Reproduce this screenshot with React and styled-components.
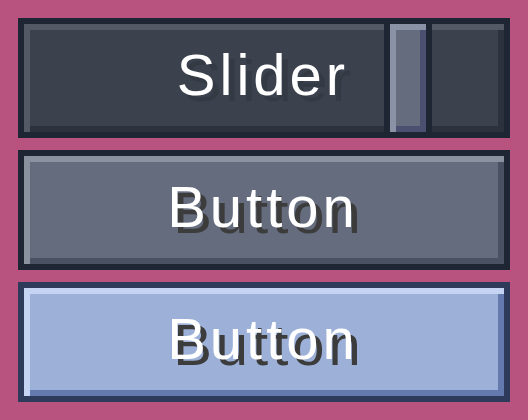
import React from "react";
import styled, { createGlobalStyle, css } from "styled-components";

const GlobalStyle = createGlobalStyle`
  html, body {
    margin: 0;
    padding: 0;
    background: #b8527e;
  }
  body {
    font-family: "Liberation Sans", Arial, sans-serif;
  }
`;

const Page = styled.div`
  width: 528px;
  height: 420px;
  box-sizing: border-box;
  padding: 18px;
  display: flex;
  flex-direction: column;
  gap: 12px;
  background: #b8527e;
`;

const variants = {
  dark: {
    border: "#1e2533",
    body: "#3b424e",
    light: "#535a66",
    shade: "#2b323e",
    textShadow: "#343a44",
  },
  gray: {
    border: "#1e2533",
    body: "#646c7e",
    light: "#8a919f",
    shade: "#4a5163",
    textShadow: "#3c3c3c",
  },
  blue: {
    border: "#2d3a5a",
    body: "#9db1d8",
    light: "#c4d4f2",
    shade: "#6479ad",
    textShadow: "#3c3c3c",
  },
};

const bevel = (v) => css`
  background: ${v.body};
  box-shadow: inset 6px 6px 0 ${v.light}, inset -6px -6px 0 ${v.shade};
`;

const Frame = styled.div`
  height: 120px;
  box-sizing: border-box;
  border: 6px solid ${(p) => variants[p.$variant].border};
  display: flex;
`;

const Face = styled.button`
  flex: 1;
  margin: 0;
  border: 0;
  padding: 0 2px 6px 0;
  display: flex;
  align-items: center;
  justify-content: center;
  position: relative;
  cursor: pointer;
  ${(p) => bevel(variants[p.$variant])}
`;

const Label = styled.span`
  position: relative;
  z-index: 1;
  font-family: "Liberation Sans", Arial, sans-serif;
  font-size: 58px;
  line-height: 58px;
  letter-spacing: 4px;
  color: #ffffff;
  text-shadow: 6px 6px 0 ${(p) => variants[p.$variant].textShadow};
  white-space: nowrap;
`;

const Thumb = styled.div`
  position: absolute;
  top: 0;
  bottom: 0;
  width: 36px;
  border-left: 6px solid #1e2533;
  border-right: 6px solid #1e2533;
  background: #646c7e;
  box-shadow: inset 6px 6px 0 #8a93a5, inset -6px -6px 0 #4b5070;
`;

function Slider({ value, label }) {
  const trackWidth = 480;
  const thumbWidth = 48;
  const left = Math.round(((trackWidth - thumbWidth) * value) / 6) * 6;
  return (
    <Frame $variant="dark">
      <Face as="div" $variant="dark" role="slider" aria-valuenow={value}>
        <Thumb style={{ left }} />
        <Label $variant="dark">{label}</Label>
      </Face>
    </Frame>
  );
}

function Button({ variant, children }) {
  return (
    <Frame $variant={variant}>
      <Face $variant={variant}>
        <Label $variant={variant}>{children}</Label>
      </Face>
    </Frame>
  );
}

export default function App() {
  return (
    <>
      <GlobalStyle />
      <Page>
        <Slider value={0.8333} label="Slider" />
        <Button variant="gray">Button</Button>
        <Button variant="blue">Button</Button>
      </Page>
    </>
  );
}
